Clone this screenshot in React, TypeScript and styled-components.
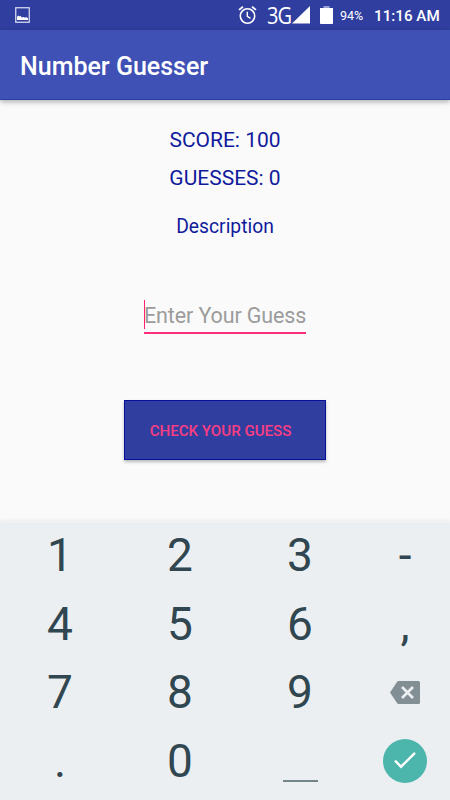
import React from "react";
import styled, { createGlobalStyle } from "styled-components";

const GlobalStyle = createGlobalStyle`
  * { box-sizing: border-box; }
  body { margin: 0; background: #fafafa; font-family: Roboto, sans-serif; }
`;

const Screen = styled.div`
  width: 450px;
  height: 800px;
  display: flex;
  flex-direction: column;
  overflow: hidden;
  background: #fafafa;
`;

const StatusBar = styled.header`
  height: 30px;
  flex: none;
  display: flex;
  align-items: center;
  padding: 0 10px 0 15px;
  background: #303f9f;
  color: #fff;
  svg { display: block; flex: none; }
`;

const Spacer = styled.div`
  flex: 1;
`;

const Network = styled.span`
  margin-left: 10px;
  width: 25px;
  font: 400 23px/30px "Open Sans", sans-serif;
  letter-spacing: -1.2px;
  white-space: nowrap;
  transform: scaleX(0.87);
  transform-origin: left;
`;

const BatterySlot = styled.span`
  margin-left: 10px;
`;

const Percent = styled.span`
  margin-left: 7px;
  width: 24px;
  font-size: 12.5px;
  line-height: 30px;
  padding-top: 1px;
`;

const Clock = styled.span`
  margin-left: 10px;
  width: 66px;
  font-size: 15.2px;
  font-weight: 500;
  line-height: 30px;
  padding-top: 1px;
  white-space: nowrap;
`;

const AppBar = styled.div`
  height: 70px;
  flex: none;
  padding: 4px 20px 0;
  display: flex;
  align-items: center;
  background: #3f51b5;
  border-bottom: 1px solid #2c3da8;
  box-shadow: 0 2px 5px rgba(0, 0, 0, 0.3);
`;

const Title = styled.h1`
  margin: 0;
  color: #fff;
  font-size: 25px;
  line-height: 30px;
  font-weight: 500;
`;

const Content = styled.main`
  flex: 1;
  display: flex;
  flex-direction: column;
  align-items: center;
`;

const Stat = styled.div<{ $size: number; $top: number }>`
  margin-top: ${(p) => p.$top}px;
  font-size: ${(p) => p.$size}px;
  line-height: 26px;
  color: #101a9c;
`;

const Field = styled.div`
  margin-top: 60px;
  width: 162px;
  height: 34px;
  display: flex;
  align-items: flex-start;
  border-bottom: 2px solid #ff2d7c;
`;

const Caret = styled.i`
  flex: none;
  width: 1px;
  height: 29px;
  margin-right: -1px;
  background: #ff1f74;
`;

const Hint = styled.span`
  font-size: 21.5px;
  letter-spacing: -0.12px;
  line-height: 32px;
  color: #9c9c9c;
  white-space: nowrap;
`;

const CheckButton = styled.button`
  margin: 66px 0 0 -1px;
  width: 202px;
  height: 60px;
  padding: 2px 8px 0 0;
  border: 1px solid #06109a;
  background: #303f9f;
  color: #f93d82;
  font: 500 15.1px/20px Roboto, sans-serif;
  white-space: nowrap;
  box-shadow: 0 2px 3px rgba(0, 0, 0, 0.26);
`;

const Keypad = styled.section`
  height: 279px;
  flex: none;
  display: grid;
  grid-template-columns: 120px 120px 120px 90px;
  grid-template-rows: 69px 69px 68px 69px;
  background: #eceff1;
  box-shadow: inset 0 2px 0 #f1f2f3, 0 -1px 3px rgba(0, 0, 0, 0.06);
`;

const Key = styled.div`
  display: flex;
  align-items: center;
  justify-content: center;
  padding-bottom: 2px;
  font-size: 46px;
  line-height: 54px;
  color: #304650;
`;

const SpaceMark = styled.i`
  width: 35px;
  height: 2px;
  margin-top: 40px;
  background: #75848b;
`;

const DoneCircle = styled.span`
  width: 44px;
  height: 44px;
  border-radius: 50%;
  display: flex;
  align-items: center;
  justify-content: center;
  background: #4db6ac;
`;

const PictureIcon = () => (
  <svg width="15" height="16" viewBox="0 0 15 16">
    <rect x="0.75" y="0.75" width="13.5" height="14.5" fill="none" stroke="#dfe2f5" strokeWidth="1.2" />
    <path d="M2 13V9.8L3.6 8.4l1 1 .8-.6 1.4 1.7 2-.4 1.2.6 1.2-.8 1.8 1.3v1.8z" fill="#fff" />
  </svg>
);

const AlarmIcon = () => (
  <svg width="19" height="19" viewBox="0 0 19 19" fill="none" stroke="#fff">
    <circle cx="9.5" cy="10" r="7.2" strokeWidth="1.6" />
    <path d="M1 3.9 5 .7M14 .7l4 3.2" strokeWidth="1.8" />
    <path d="M9.3 5.7v4.7l3.2 2" strokeWidth="1.4" />
  </svg>
);

const SignalIcon = () => (
  <svg width="18" height="18" viewBox="0 0 18 18">
    <path d="M18 0v17.5H0z" fill="#fff" />
  </svg>
);

const BatteryIcon = () => (
  <svg width="13" height="18" viewBox="0 0 13 18">
    <path d="M3.5 0h6v2h-6z" fill="#9ba3d4" />
    <path d="M0 2h13v15.2a.8.8 0 0 1-.8.8H.8a.8.8 0 0 1-.8-.8z" fill="#fff" />
  </svg>
);

const BackspaceIcon = () => (
  <svg width="30" height="23" viewBox="0 0 30 23">
    <path d="M8.6 0H28.5A1.5 1.5 0 0 1 30 1.5v20a1.5 1.5 0 0 1-1.5 1.5H8.6Q7.6 23 7 22L0 11.5 7 1Q7.6 0 8.6 0z" fill="#828f94" />
    <path d="m12 6 11 11M23 6 12 17" stroke="#eceff1" strokeWidth="2.7" />
  </svg>
);

const CheckIcon = () => (
  <svg width="22" height="17" viewBox="0 0 22 17">
    <path d="m1 8.7 6 6L21 .9" fill="none" stroke="#fff" strokeWidth="2.4" />
  </svg>
);

const keys: React.ReactNode[] = [
  "1", "2", "3", "-",
  "4", "5", "6", ",",
  "7", "8", "9", <BackspaceIcon />,
  ".", "0", <SpaceMark />, <DoneCircle><CheckIcon /></DoneCircle>,
];

export default function App() {
  return (
    <>
      <GlobalStyle />
      <Screen>
        <StatusBar>
          <PictureIcon />
          <Spacer />
          <AlarmIcon />
          <Network>3G</Network>
          <SignalIcon />
          <BatterySlot><BatteryIcon /></BatterySlot>
          <Percent>94%</Percent>
          <Clock>11:16 AM</Clock>
        </StatusBar>
        <AppBar>
          <Title>Number Guesser</Title>
        </AppBar>
        <Content>
          <Stat $size={21} $top={27}>SCORE: 100</Stat>
          <Stat $size={21} $top={12}>GUESSES: 0</Stat>
          <Stat $size={19.3} $top={23}>Description</Stat>
          <Field>
            <Caret />
            <Hint>Enter Your Guess</Hint>
          </Field>
          <CheckButton>CHECK YOUR GUESS</CheckButton>
        </Content>
        <Keypad>
          {keys.map((key, i) => <Key key={i}>{key}</Key>)}
        </Keypad>
      </Screen>
    </>
  );
}
